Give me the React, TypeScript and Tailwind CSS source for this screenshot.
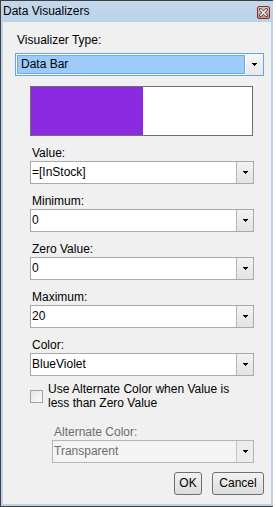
import React from "react";

const Arrow = () => (
  <svg width="5" height="3" viewBox="0 0 5 3" shapeRendering="crispEdges">
    <rect x="0" y="0" width="5" height="1" fill="#000" />
    <rect x="1" y="1" width="3" height="1" fill="#000" />
    <rect x="2" y="2" width="1" height="1" fill="#000" />
  </svg>
);

function Combo({ value, disabled }: { value: string; disabled?: boolean }) {
  return (
    <div
      className={
        disabled
          ? "flex h-[23px] border border-[#b4b4b4] bg-[#f4f4f4]"
          : "flex h-[23px] border border-[#a9a9a9] bg-white"
      }
    >
      <div
        className={
          disabled
            ? "flex-1 flex items-center pl-[1px] leading-[15px] text-[#6d6d6d]"
            : "flex-1 flex items-center pl-[1px] leading-[15px] text-black"
        }
      >
        {value}
      </div>
      <div
        className={
          disabled
            ? "w-[17px] border-l border-[#c4c4c4] bg-[#ececec] flex items-center justify-center"
            : "w-[17px] border-l border-[#b4b4b4] bg-gradient-to-b from-[#f3f3f3] to-[#e3e3e3] flex items-center justify-center"
        }
      >
        <Arrow />
      </div>
    </div>
  );
}

function Field({ label, value }: { label: string; value: string }) {
  return (
    <div className="ml-[27px] mt-[10px] w-[224px]">
      <div className="pl-[2px] h-[15px] leading-[15px] text-black">{label}</div>
      <Combo value={value} />
    </div>
  );
}

export default function App() {
  return (
    <div className="w-[276px] h-[507px] bg-white font-['Liberation_Sans',Arial,sans-serif] text-[12px] overflow-hidden">
      <div className="w-[273px] h-[507px] border-l border-t border-b border-[#3f3f3f] bg-[#bcd3ea] flex flex-col">
        {/* title bar */}
        <div className="h-[21px] flex items-start justify-between bg-gradient-to-b from-[#c3d8ed] to-[#bcd2e9]">
          <div className="pl-[2px] pt-[3px] leading-[15px] text-black">Data Visualizers</div>
          <div className="mt-[5px] mr-[3px] w-[13px] h-[13px] rounded-[2px] border border-[#7d322a] bg-gradient-to-b from-[#e8c3bd] to-[#c98a80] flex items-center justify-center">
            <svg width="9" height="9" viewBox="0 0 9 9">
              <path d="M1.5 1.5 L7.5 7.5 M7.5 1.5 L1.5 7.5" stroke="#4a4a4a" strokeWidth="3" strokeLinecap="square" />
              <path d="M1.8 1.8 L7.2 7.2 M7.2 1.8 L1.8 7.2" stroke="#ffffff" strokeWidth="1.4" strokeLinecap="square" />
            </svg>
          </div>
        </div>
        {/* content */}
        <div className="ml-[2px] mr-[2px] h-[482px] bg-[#f0f0f0] flex flex-col">
          <div className="ml-[14px] mt-[11px] h-[15px] leading-[15px] text-black">Visualizer Type:</div>
          <div className="ml-[12px] mt-[5px] w-[249px] h-[23px] border border-[#62a6ea] bg-white flex">
            <div className="flex-1 m-[1px] mr-0 border border-[#6aaaea] bg-[#9ccbfa] flex items-center pl-[3px] leading-[15px] text-black">
              Data Bar
            </div>
            <div className="w-[17px] ml-[1px] bg-gradient-to-b from-[#f7f7f7] to-[#e8e8e8] flex items-center justify-center">
              <Arrow />
            </div>
          </div>
          <div className="ml-[27px] mt-[10px] w-[223px] h-[50px] border border-[#6f6f6f] bg-white flex">
            <div className="w-[112px] h-full bg-[#8a2be2]" />
          </div>
          <Field label="Value:" value="=[InStock]" />
          <Field label="Minimum:" value="0" />
          <Field label="Zero Value:" value="0" />
          <Field label="Maximum:" value="20" />
          <Field label="Color:" value="BlueViolet" />
          <div className="ml-[27px] mt-[6px] flex items-center gap-[5px]">
            <div className="w-[13px] h-[13px] border border-[#a3a3a3] bg-gradient-to-br from-[#e6e6e6] to-[#fbfbfb]" />
            <div className="leading-[14px] text-black">
              Use Alternate Color when Value is
              <br />
              less than Zero Value
            </div>
          </div>
          <div className="ml-[49px] mt-[15px] w-[202px]">
            <div className="pl-[2px] h-[15px] leading-[15px] text-[#6d6d6d]">Alternate Color:</div>
            <Combo value="Transparent" disabled />
          </div>
          <div className="mt-[9px] flex justify-end gap-[10px] pr-[7px]">
            <div className="w-[28px] h-[23px] rounded-[3px] border border-[#707070] bg-gradient-to-b from-[#f2f2f2] to-[#dcdcdc] flex items-center justify-center leading-[15px] text-black">
              OK
            </div>
            <div className="w-[52px] h-[23px] rounded-[3px] border border-[#707070] bg-gradient-to-b from-[#f2f2f2] to-[#dcdcdc] flex items-center justify-center leading-[15px] text-black">
              Cancel
            </div>
          </div>
        </div>
      </div>
    </div>
  );
}
